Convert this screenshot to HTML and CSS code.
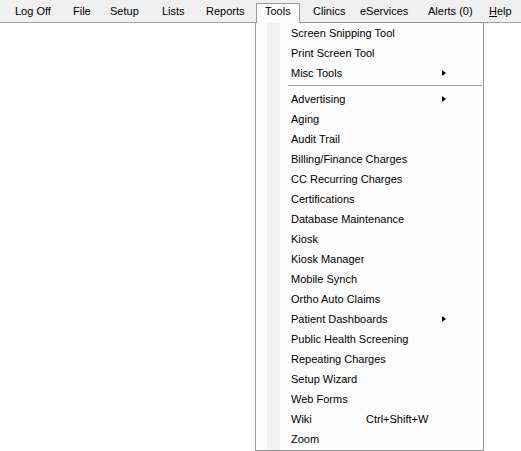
FILE: index.html
```html
<!DOCTYPE html>
<html>
<head>
<meta charset="utf-8">
<link rel="stylesheet" href="styles.css">
</head>
<body>
<div class="menubar">
  <span class="mitem">Log Off</span>
  <span class="mitem">File</span>
  <span class="mitem">Setup</span>
  <span class="mitem">Lists</span>
  <span class="mitem">Reports</span>
  <span class="mitem open">Tools</span>
  <span class="mitem">Clinics</span>
  <span class="mitem">eServices</span>
  <span class="mitem">Alerts (0)</span>
  <span class="mitem"><u>H</u>elp</span>
</div>
<div class="dropdown">
  <div class="row"><span class="label">Screen Snipping Tool</span></div>
  <div class="row"><span class="label">Print Screen Tool</span></div>
  <div class="row"><span class="label">Misc Tools</span><span class="arrow"></span></div>
  <div class="sep"></div>
  <div class="row"><span class="label">Advertising</span><span class="arrow"></span></div>
  <div class="row"><span class="label">Aging</span></div>
  <div class="row"><span class="label">Audit Trail</span></div>
  <div class="row"><span class="label">Billing/Finance Charges</span></div>
  <div class="row"><span class="label">CC Recurring Charges</span></div>
  <div class="row"><span class="label">Certifications</span></div>
  <div class="row"><span class="label">Database Maintenance</span></div>
  <div class="row"><span class="label">Kiosk</span></div>
  <div class="row"><span class="label">Kiosk Manager</span></div>
  <div class="row"><span class="label">Mobile Synch</span></div>
  <div class="row"><span class="label">Ortho Auto Claims</span></div>
  <div class="row"><span class="label">Patient Dashboards</span><span class="arrow"></span></div>
  <div class="row"><span class="label">Public Health Screening</span></div>
  <div class="row"><span class="label">Repeating Charges</span></div>
  <div class="row"><span class="label">Setup Wizard</span></div>
  <div class="row"><span class="label">Web Forms</span></div>
  <div class="row"><span class="label short">Wiki</span><span class="shortcut">Ctrl+Shift+W</span></div>
  <div class="row"><span class="label">Zoom</span></div>
</div>
</body>
</html>
```
FILE: styles.css
```css
html, body {
  margin: 0;
  padding: 0;
  background: #ffffff;
}
body {
  width: 521px;
  height: 451px;
  overflow: hidden;
  position: relative;
  font-family: "Liberation Sans", Arial, sans-serif;
  font-size: 11px;
  color: #000000;
}
.menubar {
  display: grid;
  grid-template-columns: 54px 33px 48px 40px 55px 44px 43px 64px 57px auto;
  column-gap: 4px;
  height: 22px;
  padding-left: 6px;
  background: #f0f0f0;
  border-bottom: 1px solid #a0a0a0;
}
.mitem {
  position: relative;
  padding-left: 9px;
  height: 22px;
  line-height: 22px;
  white-space: nowrap;
}
.mitem.open {
  z-index: 3;
  isolation: isolate;
}
.mitem.open::before {
  content: "";
  position: absolute;
  top: 3px;
  left: 0;
  right: 0;
  bottom: -1px;
  border: 1px solid #999999;
  border-bottom: none;
  background: #fcfcfc;
  z-index: -1;
}
.dropdown {
  position: absolute;
  left: 255px;
  top: 22px;
  width: 227px;
  padding: 0 0 1px 0;
  border: 1px solid #979797;
  background: linear-gradient(to right, #fcfcfc 0, #fcfcfc 11px, #f1f1f1 11px, #f1f1f1 24px, #fcfcfc 24px);
  z-index: 2;
}
.row {
  display: flex;
  align-items: center;
  height: 20px;
  line-height: 20px;
  padding-left: 35px;
  padding-right: 37px;
  white-space: nowrap;
}
.label.short {
  min-width: 75px;
}
.arrow {
  margin-left: auto;
  width: 0;
  height: 0;
  border-left: 4px solid #000000;
  border-top: 3.5px solid transparent;
  border-bottom: 3.5px solid transparent;
}
.sep {
  height: 6px;
  margin-left: 32px;
  margin-right: 1px;
  position: relative;
}
.sep::after {
  content: "";
  position: absolute;
  left: 0;
  right: 0;
  top: 2px;
  border-top: 1px solid #a0a0a0;
}
```
